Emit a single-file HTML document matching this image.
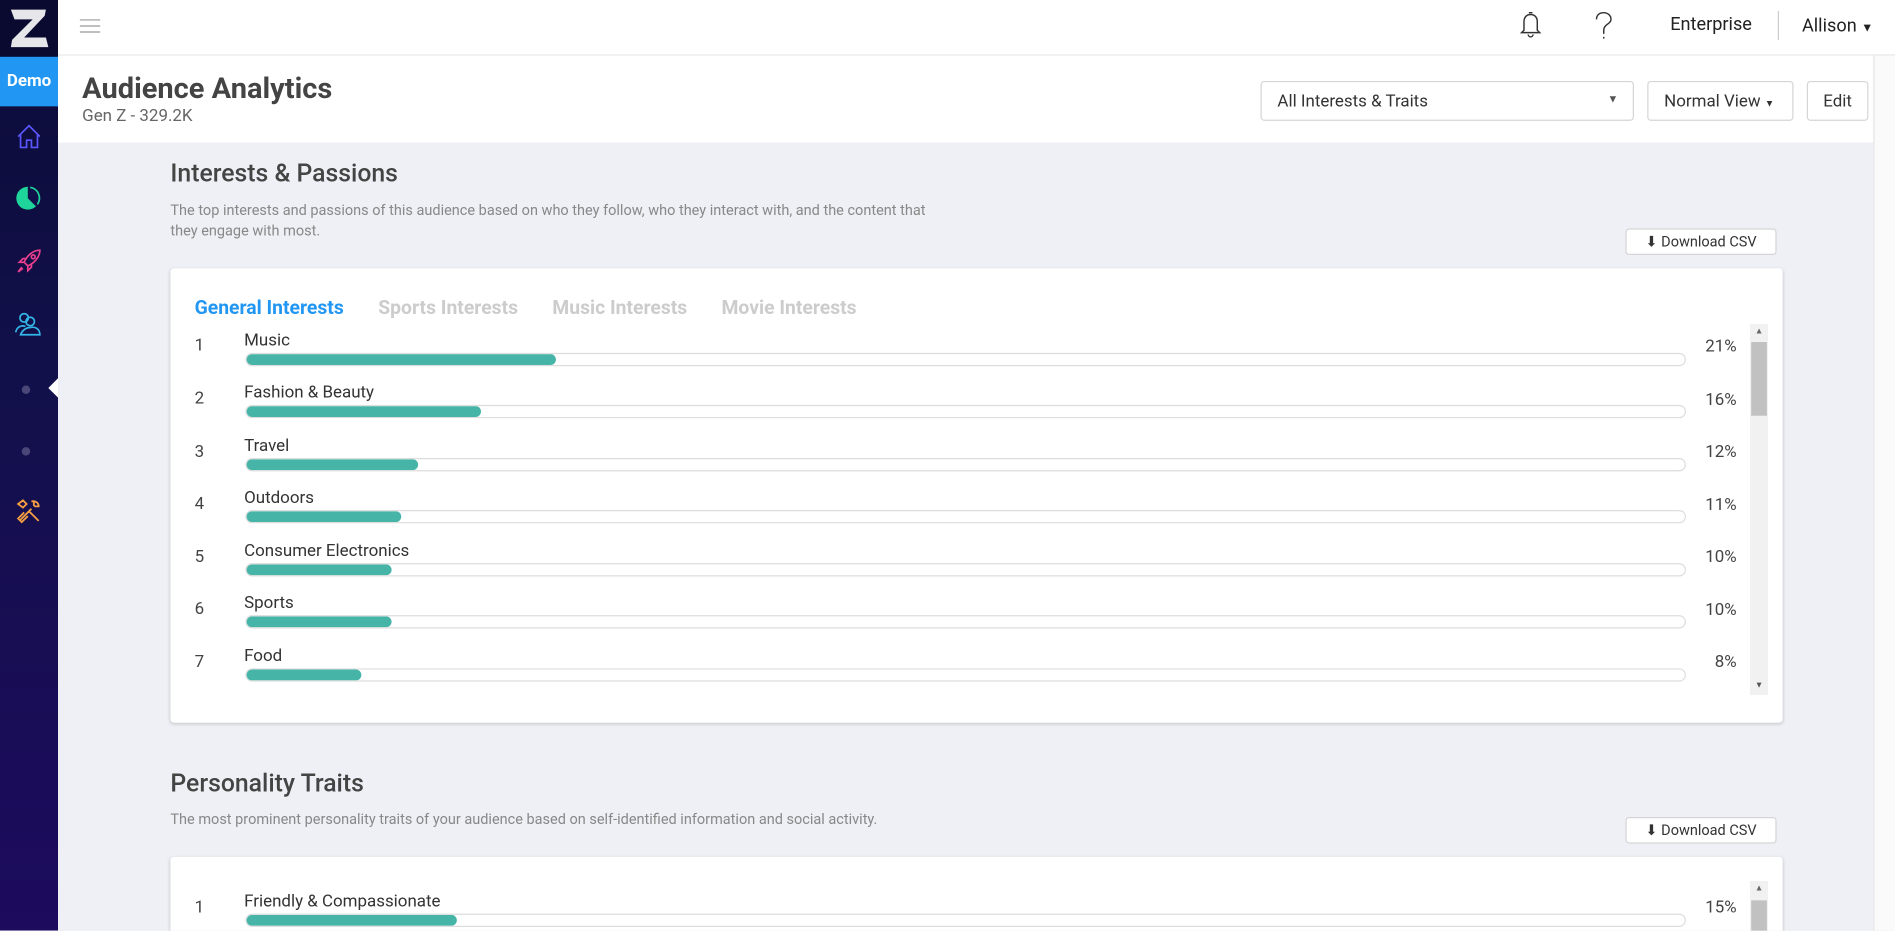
<!DOCTYPE html>
<html><head><meta charset="utf-8"><style>
*{box-sizing:border-box;margin:0;padding:0}
html,body{width:1895px;height:930px;overflow:hidden;background:#eef0f5}
#w{position:absolute;left:0;top:0;width:1568px;height:770px;transform:scale(1.20855);transform-origin:0 0;font-family:"Roboto","Liberation Sans",sans-serif;background:#eef0f5;overflow:hidden}
.a{position:absolute}
#side{left:0;top:0;width:48px;height:770px;background:linear-gradient(#0b0b38,#12104a 40%,#1d0b5e)}
#logo{left:0;top:0;width:48px;height:47px;background:#0a0a30}
#demo{left:0;top:47px;width:48px;height:41px;background:#2196f3;color:#fff;font-weight:bold;font-size:14px;text-align:center;line-height:41px}
#hdr{left:48px;top:0;width:1520px;height:46px;background:#fff;border-bottom:1px solid #e6e6e6}
#band{left:48px;top:46px;width:1520px;height:72px;background:#fff}
#rs{left:1550px;top:46px;width:18px;height:724px;background:#fafafa;border-left:1px solid #e5e5e5}
.btn{background:#fff;border:1px solid #d5d5d5;border-radius:3px;font-size:14px;color:#333}
.card{background:#fff;border-radius:3px;box-shadow:0 1px 3px rgba(0,0,0,.18)}
.h2{font-size:20.5px;color:#444;font-weight:500}
.desc{font-size:12px;color:#888;line-height:17px}
.dl{width:125px;height:22px;font-size:12px;line-height:20px;text-align:center}
.num{font-size:14px;color:#444;left:161px}
.lbl{font-size:14px;color:#333;left:202px}
.bar{left:203px;width:1192px;height:11px;border:1px solid #ddd;border-radius:6px;overflow:hidden}
.bar i{display:block;height:100%;background:#46b5a8;border-radius:6px}
.pct{font-size:14px;color:#444;width:60px;text-align:right;left:1377px}
.tab{font-size:16px;font-weight:bold;color:#ccc;top:245px}
.dot{width:7px;height:7px;border-radius:50%;background:#4a4778;left:18px}
</style></head><body><div id="w">
<div id="side" class="a"></div>
<div id="logo" class="a"><svg width="48" height="47"><path d="M9 8H38L37 13 20 31H38L40 39H9L10 33 27 16H12Z" fill="#e6e6ea"/></svg></div>
<div id="demo" class="a">Demo</div>
<svg class="a" style="left:12px;top:101px" width="24" height="24" fill="none" stroke="#5b56ff" stroke-width="1.4"><path d="M3 12L12 3 21 12M5 10V21H10V15H14V21H19V10"/></svg>
<svg class="a" style="left:12px;top:152px" width="24" height="24"><circle cx="11" cy="12" r="9.5" fill="#1ed49a"/><path d="M11 12V2.5A9.5 9.5 0 0 1 17.7 18.7Z" fill="#12104a"/><path d="M13 3A9 9 0 0 1 19 17" stroke="#1ed49a" stroke-width="1.4" fill="none"/></svg>
<svg class="a" style="left:12px;top:204px" width="24" height="24" fill="none" stroke="#e83e8c" stroke-width="1.4"><path d="M21 3C15 3 10 8 8 13L11 16C16 14 21 9 21 3ZM8 13L4 13 7 10 10 10M11 16V20L14 17 14 14M6 17L3 21 7 18"/><circle cx="15.5" cy="8.5" r="1.6"/></svg>
<svg class="a" style="left:11px;top:256px" width="26" height="24" fill="none" stroke="#33b6e8" stroke-width="1.4"><circle cx="9" cy="7" r="3.5"/><circle cx="14" cy="10" r="3.5"/><path d="M2 19C3 14 7 13 10 14M6 21H22C22 16 18 14 14 15 10 15 7 18 6 21Z"/></svg>
<div class="a dot" style="top:319px"></div>
<svg class="a" style="left:40px;top:313px" width="8" height="16"><path d="M8 0V16L0 8Z" fill="#fff"/></svg>
<div class="a dot" style="top:370px"></div>
<svg class="a" style="left:12px;top:411px" width="24" height="24" fill="none" stroke="#f59e42" stroke-width="1.5"><path d="M4 20L14 10M3 6L7 3 10 6 7 9ZM20 20L12 12M14 4C17 3 20 5 20 8L17 8 16 7 16 4M8 13L3 18 6 21 11 16"/></svg>
<div id="hdr" class="a"></div>
<svg class="a" style="left:66px;top:15px" width="17" height="13" stroke="#999" stroke-width="1"><path d="M0 1.5H17M0 6.5H17M0 11.5H17"/></svg>
<svg class="a" style="left:1257px;top:9px" width="19" height="22" fill="none" stroke="#333" stroke-width="1.2"><path d="M4 16V9C4 5 6.5 3 9.5 3S15 5 15 9V16L17 18H2Z M8 1.5H11M7.5 19.5A2 2 0 0 0 11.5 19.5"/></svg>
<svg class="a" style="left:1318px;top:9px" width="18" height="24" fill="none" stroke="#333" stroke-width="1.2"><path d="M3 7C3 3 6 1.5 9 1.5S15 3.5 15 7C15 11 9 11 9 16V19M9 21.5V23"/></svg>
<div class="a" style="left:1382px;top:11px;font-size:15px;color:#222">Enterprise</div>
<div class="a" style="left:1471px;top:9px;width:1px;height:24px;background:#ccc"></div>
<div class="a" style="left:1491px;top:12px;font-size:15px;color:#222">Allison <span style="font-size:10px">▼</span></div>
<div id="band" class="a"></div>
<div id="rs" class="a"></div>
<div class="a" style="left:68px;top:59px;font-size:24px;font-weight:bold;color:#444">Audience Analytics</div>
<div class="a" style="left:68px;top:88px;font-size:14px;color:#666">Gen Z - 329.2K</div>
<div class="a btn" style="left:1043px;top:67px;width:309px;height:33px;padding:8px 13px">All Interests &amp; Traits<span style="position:absolute;right:12px;top:9px;font-size:9px;color:#555">▼</span></div>
<div class="a btn" style="left:1363px;top:67px;width:121px;height:33px;padding:8px 13px">Normal View <span style="font-size:8px">▼</span></div>
<div class="a btn" style="left:1495px;top:67px;width:51px;height:33px;padding:8px 0;text-align:center">Edit</div>

<div class="a h2" style="left:141px;top:132px">Interests &amp; Passions</div>
<div class="a desc" style="left:141px;top:166px;width:650px">The top interests and passions of this audience based on who they follow, who they interact with, and the content that they engage with most.</div>
<div class="a btn dl" style="left:1345px;top:189px">⬇ Download CSV</div>
<div class="a card" style="left:141px;top:222px;width:1334px;height:376px"></div>
<div class="a tab" style="left:161px;color:#2196f3">General Interests</div>
<div class="a tab" style="left:313px">Sports Interests</div>
<div class="a tab" style="left:457px">Music Interests</div>
<div class="a tab" style="left:597px">Movie Interests</div>

<div class="a num" style="top:278px">1</div><div class="a lbl" style="top:274px">Music</div><div class="a bar" style="top:292px"><i style="width:256px"></i></div><div class="a pct" style="top:279px">21%</div>
<div class="a num" style="top:322px">2</div><div class="a lbl" style="top:317px">Fashion &amp; Beauty</div><div class="a bar" style="top:335px"><i style="width:194px"></i></div><div class="a pct" style="top:323px">16%</div>
<div class="a num" style="top:366px">3</div><div class="a lbl" style="top:361px">Travel</div><div class="a bar" style="top:379px"><i style="width:142px"></i></div><div class="a pct" style="top:366px">12%</div>
<div class="a num" style="top:409px">4</div><div class="a lbl" style="top:404px">Outdoors</div><div class="a bar" style="top:422px"><i style="width:128px"></i></div><div class="a pct" style="top:410px">11%</div>
<div class="a num" style="top:453px">5</div><div class="a lbl" style="top:448px">Consumer Electronics</div><div class="a bar" style="top:466px"><i style="width:120px"></i></div><div class="a pct" style="top:453px">10%</div>
<div class="a num" style="top:496px">6</div><div class="a lbl" style="top:491px">Sports</div><div class="a bar" style="top:509px"><i style="width:120px"></i></div><div class="a pct" style="top:497px">10%</div>
<div class="a num" style="top:540px">7</div><div class="a lbl" style="top:535px">Food</div><div class="a bar" style="top:553px"><i style="width:95px"></i></div><div class="a pct" style="top:540px">8%</div>
<div class="a" style="left:1448px;top:268px;width:15px;height:307px;background:#f1f1f1"></div>
<div class="a" style="left:1449px;top:283px;width:13px;height:61px;background:#c1c1c1"></div>
<div class="a" style="left:1452px;top:270px;font-size:7px;color:#666">▲</div>
<div class="a" style="left:1452px;top:563px;font-size:7px;color:#555">▼</div>

<div class="a h2" style="left:141px;top:637px">Personality Traits</div>
<div class="a desc" style="left:141px;top:670px">The most prominent personality traits of your audience based on self-identified information and social activity.</div>
<div class="a btn dl" style="left:1345px;top:676px">⬇ Download CSV</div>
<div class="a card" style="left:141px;top:709px;width:1334px;height:120px"></div>
<div class="a num" style="top:743px">1</div><div class="a lbl" style="top:738px">Friendly &amp; Compassionate</div><div class="a bar" style="top:756px"><i style="width:174px"></i></div><div class="a pct" style="top:743px">15%</div>
<div class="a" style="left:1448px;top:729px;width:15px;height:60px;background:#f1f1f1"></div>
<div class="a" style="left:1449px;top:745px;width:13px;height:40px;background:#c1c1c1"></div>
<div class="a" style="left:1452px;top:731px;font-size:7px;color:#666">▲</div>
</div></body></html>
